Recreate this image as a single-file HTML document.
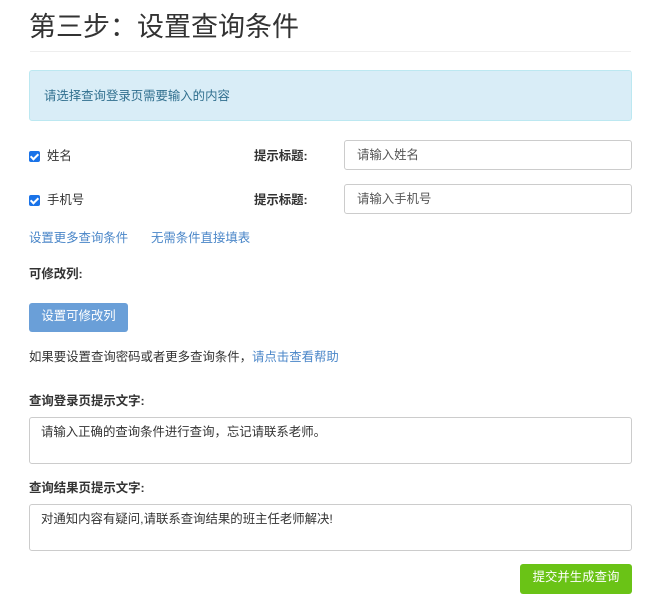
<!DOCTYPE html>
<html><head><meta charset="utf-8"><style>
body{margin:0;width:656px;height:604px;background:#fff;font-family:"Liberation Sans","Noto Sans CJK SC",sans-serif;color:#333;font-size:12.4px;position:relative;overflow:hidden}
.a{position:absolute;white-space:nowrap}
.b{font-weight:bold}
.cb{position:absolute;width:11px;height:11px;background:#1a73e8;border-radius:2px}
.cb:after{content:"";position:absolute;left:3px;top:1px;width:3px;height:6px;border:solid #fff;border-width:0 2px 2px 0;transform:rotate(45deg)}
.inp{position:absolute;border:1px solid #ccc;border-radius:3px;box-sizing:border-box;background:#fff}
.link{color:#4a86c8}
</style></head><body>
<div class="a" style="left:29px;top:5px;font-size:27px;color:#333">第三步：设置查询条件</div>
<div class="a" style="left:30px;top:51px;width:601px;height:1px;background:#eee"></div>
<div class="a" style="left:29px;top:70px;width:601px;height:49px;background:#d9edf7;border:1px solid #bce8f1;border-radius:3px"></div>
<div class="a" style="left:44px;top:86px;color:#31708f">请选择查询登录页需要输入的内容</div>

<div class="cb" style="left:29px;top:151px"></div>
<div class="a" style="left:47px;top:146px">姓名</div>
<div class="a b" style="left:254px;top:146px">提示标题:</div>
<div class="inp" style="left:344px;top:140px;width:288px;height:30px"></div>
<div class="a" style="left:357px;top:145px;color:#555">请输入姓名</div>

<div class="cb" style="left:29px;top:195px"></div>
<div class="a" style="left:47px;top:190px">手机号</div>
<div class="a b" style="left:254px;top:190px">提示标题:</div>
<div class="inp" style="left:344px;top:184px;width:288px;height:30px"></div>
<div class="a" style="left:357px;top:189px;color:#555">请输入手机号</div>

<div class="a link" style="left:29px;top:228px">设置更多查询条件</div>
<div class="a link" style="left:151px;top:228px">无需条件直接填表</div>
<div class="a b" style="left:29px;top:264px">可修改列:</div>
<div class="a" style="left:29px;top:303px;width:99px;height:29px;background:#6a9fd8;border-radius:3px;color:#fff;text-align:center;line-height:27px">设置可修改列</div>
<div class="a" style="left:29px;top:347px">如果要设置查询密码或者更多查询条件，<span class="link">请点击查看帮助</span></div>

<div class="a b" style="left:29px;top:391px">查询登录页提示文字:</div>
<div class="inp" style="left:29px;top:417px;width:603px;height:47px"></div>
<div class="a" style="left:41px;top:422px">请输入正确的查询条件进行查询，忘记请联系老师。</div>
<div class="a b" style="left:29px;top:478px">查询结果页提示文字:</div>
<div class="inp" style="left:29px;top:504px;width:603px;height:47px"></div>
<div class="a" style="left:41px;top:509px">对通知内容有疑问,请联系查询结果的班主任老师解决!</div>

<div class="a" style="left:520px;top:564px;width:112px;height:30px;background:#6ac316;border-radius:3px;color:#fff;text-align:center;line-height:27px">提交并生成查询</div>
</body></html>
